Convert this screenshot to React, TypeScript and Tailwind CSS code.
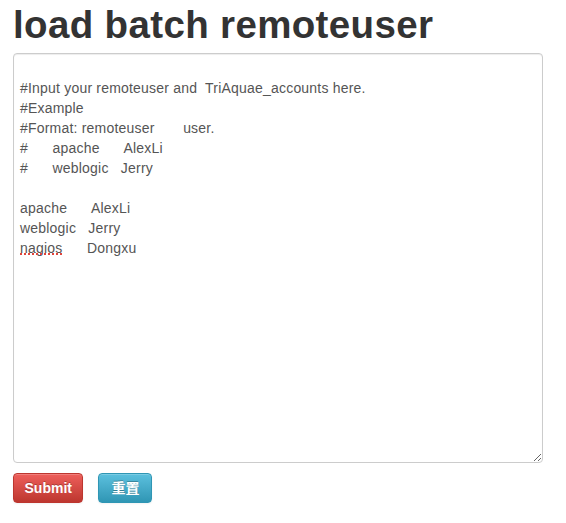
import React from 'react';

const sample = [
  '',
  '#Input your remoteuser and  TriAquae_accounts here.',
  '#Example',
  '#Format: remoteuser       user.',
  '#      apache      AlexLi',
  '#      weblogic   Jerry',
  '',
  'apache      AlexLi',
  'weblogic   Jerry',
  'nagios      Dongxu',
].join('\n');

export default function App() {
  return (
    <div className="min-h-[523px] bg-white px-[13px] font-['Liberation_Sans',Arial,sans-serif]">
      <h1 className="pt-[5px] text-[38.5px] font-bold leading-[40px] tracking-[0.35px] text-[#333333]">
        load batch remoteuser
      </h1>

      <form className="mt-[8px]">
        <div className="relative">
          <textarea
            defaultValue={sample}
            spellCheck={false}
            className="block h-[410px] w-[530px] rounded-[4px] border border-[#cccccc] bg-white px-[6px] py-[4px] text-[14px] leading-[20px] tracking-[0.2px] text-[#555555] shadow-[inset_0_1px_1px_rgba(0,0,0,0.075)] outline-none"
          />
          {/* spellcheck squiggle under "nagios" */}
          <span className="pointer-events-none absolute left-[7px] top-[200px] h-[2px] w-[42px] border-b-2 border-dotted border-[#e0443a]" />
        </div>

        <div className="mt-[10px] flex gap-[15px]">
          <button
            type="submit"
            className="h-[30px] rounded-[4px] border border-[#bd362f] bg-gradient-to-b from-[#ee5f5b] to-[#bd362f] px-[10.5px] text-[14px] font-bold leading-[20px] text-white [text-shadow:0_-1px_0_rgba(0,0,0,0.25)] shadow-[inset_0_1px_0_rgba(255,255,255,0.2),0_1px_2px_rgba(0,0,0,0.05)]"
          >
            Submit
          </button>
          <button
            type="reset"
            className="h-[30px] rounded-[4px] border border-[#2f96b4] bg-gradient-to-b from-[#5bc0de] to-[#2f96b4] px-[12px] font-['Liberation_Sans','Noto_Sans_CJK_SC',sans-serif] text-[14px] font-bold leading-[20px] text-white [text-shadow:0_-1px_0_rgba(0,0,0,0.25)] shadow-[inset_0_1px_0_rgba(255,255,255,0.2),0_1px_2px_rgba(0,0,0,0.05)]"
          >
            重置
          </button>
        </div>
      </form>
    </div>
  );
}
